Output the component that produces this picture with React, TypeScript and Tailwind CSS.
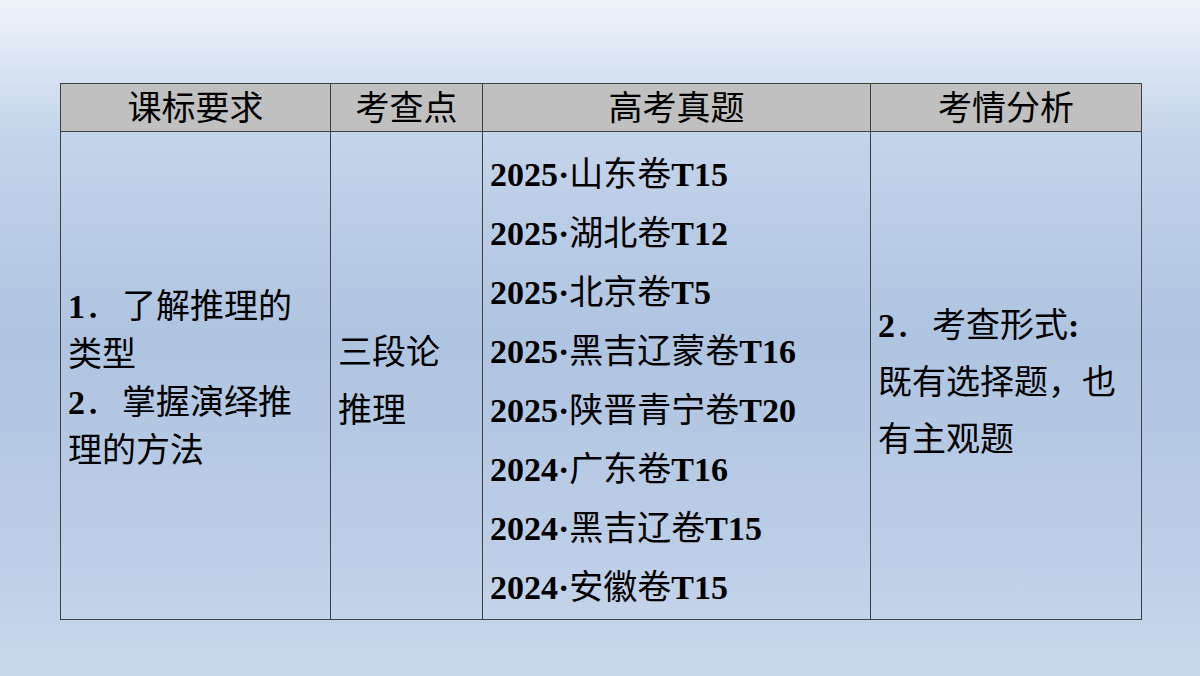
const serif = { fontFamily: '"Liberation Serif", "Noto Sans CJK SC", serif' };

const papers = [
  ["2025", "山东卷", "T15"],
  ["2025", "湖北卷", "T12"],
  ["2025", "北京卷", "T5"],
  ["2025", "黑吉辽蒙卷", "T16"],
  ["2025", "陕晋青宁卷", "T20"],
  ["2024", "广东卷", "T16"],
  ["2024", "黑吉辽卷", "T15"],
  ["2024", "安徽卷", "T15"],
];

const B = ({ children }: { children: React.ReactNode }) => <span className="font-bold">{children}</span>;

export default function App() {
  return (
    <div
      className="w-[1200px] h-[676px] overflow-hidden bg-[linear-gradient(180deg,#eff4fa_0%,#c4d4ea_20%,#afc4e0_50%,#bccde6_80%,#cad8ec_100%)] pt-[83px] pl-[60px] text-black"
      style={serif}
    >
      <table className="border-collapse table-fixed w-[1081px] text-[34px]">
        <colgroup>
          <col className="w-[270px]" />
          <col className="w-[152px]" />
          <col className="w-[388px]" />
          <col className="w-[271px]" />
        </colgroup>
        <thead>
          <tr className="h-[48px] bg-[#c0c0c0]">
            {["课标要求", "考查点", "高考真题", "考情分析"].map((h) => (
              <th key={h} className="border border-[#3f3f3f] font-normal text-center leading-none p-0 pt-[2px]">
                {h}
              </th>
            ))}
          </tr>
        </thead>
        <tbody>
          <tr className="h-[488px]">
            <td className="border border-[#3f3f3f] align-middle px-[7px] leading-[48px] pt-[6px] whitespace-nowrap">
              <div><B>1</B>．<span className="ml-[3px]">了解推理的</span></div>
              <div>类型</div>
              <div><B>2</B>．<span className="ml-[3px]">掌握演绎推</span></div>
              <div>理的方法</div>
            </td>
            <td className="border border-[#3f3f3f] align-middle px-[7px] leading-[58px] pt-[12px]">
              <div>三段论</div>
              <div>推理</div>
            </td>
            <td className="border border-[#3f3f3f] align-middle px-[7px] leading-[59px] pt-[10px]">
              {papers.map(([y, p, t]) => (
                <div key={y + p} className="whitespace-nowrap">
                  <B>{y}·</B>{p}<B>{t}</B>
                </div>
              ))}
            </td>
            <td className="border border-[#3f3f3f] align-middle px-[7px] leading-[57px] pt-[14px] whitespace-nowrap">
              <div><B>2</B>．<span className="ml-[3px]">考查形式</span><B>:</B></div>
              <div>既有选择题，也</div>
              <div>有主观题</div>
            </td>
          </tr>
        </tbody>
      </table>
    </div>
  );
}
